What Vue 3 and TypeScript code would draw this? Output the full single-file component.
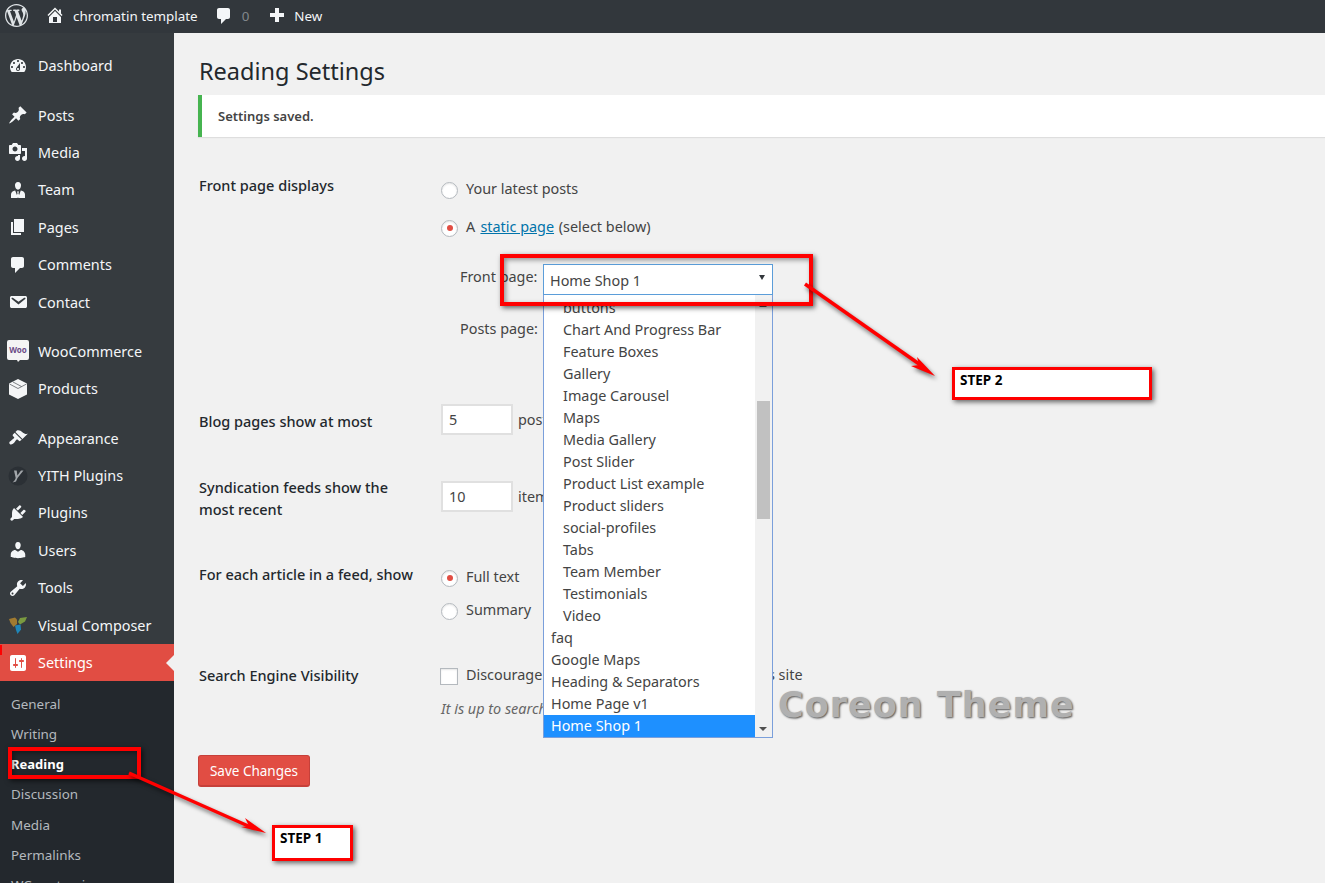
<script setup lang="ts">
interface MenuItem {
  label: string;
  icon: string;
  sep?: boolean;
}

const paths: Record<string, string> = {
  dashboard:
    'M3.76 16h12.48c1.1-1.37 1.76-3.11 1.76-5 0-4.42-3.58-8-8-8s-8 3.58-8 8c0 1.89.66 3.63 1.76 5zM10 4c.55 0 1 .45 1 1s-.45 1-1 1-1-.45-1-1 .45-1 1-1zM6 6c.55 0 1 .45 1 1s-.45 1-1 1-1-.45-1-1 .45-1 1-1zm8 0c.55 0 1 .45 1 1s-.45 1-1 1-1-.45-1-1 .45-1 1-1zm-5.37 5.55L12 7v6c0 1.1-.9 2-2 2s-2-.9-2-2c0-.57.24-1.08.63-1.45zM4 10c.55 0 1 .45 1 1s-.45 1-1 1-1-.45-1-1 .45-1 1-1zm12 0c.55 0 1 .45 1 1s-.45 1-1 1-1-.45-1-1 .45-1 1-1zm-5 3c0-.55-.45-1-1-1s-1 .45-1 1 .45 1 1 1 1-.45 1-1z',
  pin: 'M10.44 3.02l1.82-1.82 6.36 6.35-1.83 1.82c-1.05-.68-2.48-.57-3.41.36l-.75.75c-.92.93-1.04 2.35-.35 3.41l-1.83 1.82-2.41-2.41-2.8 2.79c-.42.42-3.38 2.71-3.8 2.29s1.86-3.39 2.28-3.81l2.79-2.79L4.1 9.36l1.83-1.82c1.05.69 2.48.57 3.4-.36l.75-.75c.93-.92 1.05-2.35.36-3.41z',
  media:
    'M13 11V4c0-.55-.45-1-1-1h-1.67L9 1H5L3.67 3H2c-.55 0-1 .45-1 1v7c0 .55.45 1 1 1h10c.55 0 1-.45 1-1zM7 4.5c1.38 0 2.5 1.12 2.5 2.5S8.38 9.5 7 9.5 4.5 8.38 4.5 7 5.62 4.5 7 4.5zM14 6h5v10.5c0 1.38-1.12 2.5-2.5 2.5S14 17.88 14 16.5s1.12-2.5 2.5-2.5c.17 0 .34.02.5.05V9h-3V6zm-4 8.05V13h2v3.5c0 1.38-1.12 2.5-2.5 2.5S7 17.88 7 16.5 8.12 14 9.5 14c.17 0 .34.02.5.05z',
  team: 'M10 2c2.2 0 3.2 1.8 3 3.8C12.8 7.8 11.8 9.7 10 9.7S7.2 7.8 7 5.8C6.8 3.8 7.8 2 10 2zM7.2 10.5L10 18H3v-3.5c0-2.3 1.8-3.8 4.2-4zM12.8 10.5c2.4.2 4.2 1.7 4.2 4V18h-7zM10 11l1 1-.6 1 .8 2.5L10 17l-1.2-1.5.8-2.5-.6-1z',
  sheets: 'M6 15V2h10v13H6zm-1 1h8v2H3V5h2v11z',
  comment: 'M5 2h9c1.1 0 2 .9 2 2v7c0 1.1-.9 2-2 2h-2l-5 5v-5H5c-1.1 0-2-.9-2-2V4c0-1.1.9-2 2-2z',
  mail: 'M3.87 4h13.25C18.37 4 19 4.59 19 5.79v8.42c0 1.19-.63 1.79-1.88 1.79H3.87c-1.25 0-1.88-.6-1.88-1.79V5.79c0-1.2.63-1.79 1.88-1.79zm6.62 8.6l6.74-5.53c.24-.2.43-.66.13-1.07-.29-.41-.82-.42-1.17-.17l-5.7 3.86L4.8 5.83c-.35-.25-.88-.24-1.17.17-.3.41-.11.87.13 1.07z',
  brush:
    'M14.48 11.06L7.41 3.99l1.5-1.5c.5-.56 2.3-.47 3.51.32 1.21.8 1.43 1.28 2.91 2.1 1.18.64 2.45 1.26 4.45.85zm-.71.71L6.7 4.7 4.93 6.47c-.39.39-.39 1.02 0 1.41l1.06 1.06c.39.39.39 1.03 0 1.42-.6.6-1.43 1.11-2.21 1.69-.35.26-.7.53-1.01.84C1.43 13.23.76 14.89 1.82 15.95s2.72.4 4.07-.95c.31-.31.58-.66.84-1.01.58-.78 1.09-1.61 1.69-2.21.39-.39 1.03-.39 1.42 0l1.06 1.06c.39.39 1.02.39 1.41 0z',
  plug: 'M13.11 4.36L9.87 7.6 8 5.73l3.24-3.24c.35-.34 1.05-.2 1.56.32.52.51.66 1.21.31 1.55zm-8 1.77l.91-1.12 9.01 9.01-1.19.84c-.71.71-2.63 1.16-3.82 1.16H6.14L4.9 17.26c-.59.59-1.54.59-2.12 0-.59-.58-.59-1.53 0-2.12l1.24-1.24v-3.88c0-1.13.4-3.19 1.09-3.89zm7.26 3.97l3.24-3.24c.34-.35 1.04-.21 1.55.31.52.51.66 1.21.31 1.55l-3.24 3.25z',
  user: 'M10 9.25c-2.27 0-2.73-3.44-2.73-3.44C7 4.02 7.82 2 9.97 2c2.16 0 2.98 2.02 2.71 3.81 0 0-.41 3.44-2.68 3.44zm0 2.57L12.72 10c2.39 0 4.52 2.33 4.52 4.53v2.49s-3.65 1.13-7.24 1.13c-3.65 0-7.24-1.13-7.24-1.13v-2.49c0-2.25 1.94-4.48 4.47-4.48z',
  tools:
    'M16.68 9.77c-1.34 1.34-3.3 1.67-4.95.99l-5.41 6.52c-.99.99-2.59.99-3.58 0s-.99-2.59 0-3.57l6.52-5.42c-.68-1.65-.35-3.61.99-4.95 1.28-1.28 3.12-1.62 4.72-1.06l-2.89 2.89 2.82 2.82 2.86-2.87c.53 1.58.18 3.39-1.08 4.65zM3.81 16.21c.4.39 1.04.39 1.43 0 .4-.4.4-1.04 0-1.43-.39-.4-1.03-.4-1.43 0-.39.39-.39 1.03 0 1.43z',
  settings:
    'M18 16V4c0-1.1-.9-2-2-2H4c-1.1 0-2 .9-2 2v12c0 1.1.9 2 2 2h12c1.1 0 2-.9 2-2zM8 11h1c.55 0 1 .45 1 1s-.45 1-1 1H8v1.5c0 .28-.22.5-.5.5s-.5-.22-.5-.5V13H6c-.55 0-1-.45-1-1s.45-1 1-1h1V5.5c0-.28.22-.5.5-.5s.5.22.5.5V11zm5-2h-1c-.55 0-1-.45-1-1s.45-1 1-1h1V5.5c0-.28.22-.5.5-.5s.5.22.5.5V7h1c.55 0 1 .45 1 1s-.45 1-1 1h-1v5.5c0 .28-.22.5-.5.5s-.5-.22-.5-.5V9z',
  wp: 'M20 10c0-5.51-4.49-10-10-10C4.48 0 0 4.49 0 10c0 5.52 4.48 10 10 10 5.51 0 10-4.48 10-10zM7.78 15.37L4.37 6.22c.55-.02 1.17-.08 1.17-.08.5-.06.44-1.13-.06-1.11 0 0-1.45.11-2.37.11-.18 0-.37 0-.58-.01C4.12 2.69 6.87 1.11 10 1.11c2.33 0 4.45.87 6.05 2.34-.68-.11-1.65.39-1.65 1.58 0 .74.45 1.36.9 2.1.35.61.55 1.36.55 2.46 0 1.49-1.4 5-1.4 5l-3.03-8.37c.54-.02.82-.17.82-.17.5-.05.44-1.25-.06-1.22 0 0-1.44.12-2.38.12-.87 0-2.33-.12-2.33-.12-.5-.03-.56 1.2-.06 1.22l.92.08 1.26 3.41zM17.41 10c.24-.64.74-1.87.43-4.25.7 1.29 1.05 2.71 1.05 4.25 0 3.29-1.73 6.24-4.4 7.78.97-2.59 1.94-5.2 2.92-7.78zM6.1 18.09C3.12 16.65 1.11 13.53 1.11 10c0-1.3.23-2.48.72-3.59C3.25 10.3 4.67 14.2 6.1 18.09zm4.03-6.63l2.58 6.98c-.86.29-1.76.45-2.71.45-.79 0-1.57-.11-2.29-.33.81-2.38 1.62-4.74 2.42-7.1z',
  home: 'M16 8.5l1.53 1.53-1.06 1.06L10 4.62l-6.47 6.47-1.06-1.06L10 2.5l4 4v-2h2v4zm-6-2.46l6 5.99V18H4v-5.97zM12 17v-5H8v5h4z',
  plus: 'M17 8v4h-5v5H8v-5H3V8h5V3h4v5h5z',
};

const menu: MenuItem[] = [
  { label: 'Dashboard', icon: 'dashboard' },
  { label: 'Posts', icon: 'pin', sep: true },
  { label: 'Media', icon: 'media' },
  { label: 'Team', icon: 'team' },
  { label: 'Pages', icon: 'sheets' },
  { label: 'Comments', icon: 'comment' },
  { label: 'Contact', icon: 'mail' },
  { label: 'WooCommerce', icon: 'woo', sep: true },
  { label: 'Products', icon: 'box' },
  { label: 'Appearance', icon: 'brush', sep: true },
  { label: 'YITH Plugins', icon: 'yith' },
  { label: 'Plugins', icon: 'plug' },
  { label: 'Users', icon: 'user' },
  { label: 'Tools', icon: 'tools' },
  { label: 'Visual Composer', icon: 'vc' },
];

const submenu = ['General', 'Writing', 'Reading', 'Discussion', 'Media', 'Permalinks', 'WC customizer'];

const options = [
  { label: 'buttons', nested: true },
  { label: 'Chart And Progress Bar', nested: true },
  { label: 'Feature Boxes', nested: true },
  { label: 'Gallery', nested: true },
  { label: 'Image Carousel', nested: true },
  { label: 'Maps', nested: true },
  { label: 'Media Gallery', nested: true },
  { label: 'Post Slider', nested: true },
  { label: 'Product List example', nested: true },
  { label: 'Product sliders', nested: true },
  { label: 'social-profiles', nested: true },
  { label: 'Tabs', nested: true },
  { label: 'Team Member', nested: true },
  { label: 'Testimonials', nested: true },
  { label: 'Video', nested: true },
  { label: 'faq', nested: false },
  { label: 'Google Maps', nested: false },
  { label: 'Heading & Separators', nested: false },
  { label: 'Home Page v1', nested: false },
  { label: 'Home Shop 1', nested: false },
];
</script>

<template>
  <div class="page">
    <header class="adminbar">
      <svg class="logo" viewBox="0 0 20 20"><path :d="paths.wp" /></svg>
      <svg class="bar-icon home" viewBox="0 0 20 20"><path :d="paths.home" /></svg>
      <span class="site">chromatin template</span>
      <svg class="bar-icon bubble" viewBox="0 0 20 20"><path :d="paths.comment" /></svg>
      <span class="count">0</span>
      <svg class="bar-icon add" viewBox="0 0 20 20"><path :d="paths.plus" /></svg>
      <span class="new">New</span>
    </header>

    <div class="body">
      <aside class="sidebar">
        <ul class="menu">
          <li v-for="item in menu" :key="item.label" :class="['item', { sep: item.sep }]">
            <span class="icon">
              <svg v-if="item.icon === 'woo'" class="ic-woo" viewBox="0 0 22 22">
                <path d="M2 0h18a2 2 0 0 1 2 2v16a2 2 0 0 1-2 2h-7l-2 2-1-2H2a2 2 0 0 1-2-2V2a2 2 0 0 1 2-2z" fill="#f4f4f4" />
                <text x="11" y="13" text-anchor="middle" class="woo-text">Woo</text>
              </svg>
              <svg v-else-if="item.icon === 'box'" viewBox="0 0 20 20">
                <path d="M10 0l9 4.5v11L10 20l-9-4.500v-11z" fill="#f4f5f6" />
                <path d="M1.5 5L10 9.500 18.500 5M5 3l8.500 4.500" fill="none" stroke="#4a4f54" stroke-width=".7" />
              </svg>
              <svg v-else-if="item.icon === 'yith'" viewBox="0 0 20 20">
                <circle cx="10" cy="10" r="9.5" fill="#2b3035" />
                <path d="M6 4.500h2.700l.7 5 3.600-5h2.500l-6 7.500-1.500 3.500-3.500 1c1.500-1.200 2.700-2.800 3.200-4.500z" fill="#a2a6aa" />
              </svg>
              <svg v-else-if="item.icon === 'vc'" class="ic-vc" viewBox="0 0 20 20">
                <path d="M1 4l6-1.500 2 2v4.500L5.500 12 2.500 8z" fill="#a07a30" />
                <path d="M12 3l7-1-2 4.500-5 3-2-2.500z" fill="#7a9a40" />
                <path d="M7 10.500l5.500-1 .5 5-3.500 4.500L8 15z" fill="#1f86b8" />
              </svg>
              <svg v-else viewBox="0 0 20 20"><path :d="paths[item.icon]" /></svg>
            </span>
            <span>{{ item.label }}</span>
          </li>
          <li class="item current">
            <span class="icon"><svg viewBox="0 0 20 20"><path :d="paths.settings" /></svg></span>
            <span>Settings</span>
          </li>
        </ul>
        <ul class="submenu">
          <li v-for="s in submenu" :key="s" :class="{ active: s === 'Reading' }">{{ s }}</li>
        </ul>
      </aside>

      <main class="content">
        <h1>Reading Settings</h1>
        <div class="notice">Settings saved.</div>

        <section class="row row-front">
          <div class="label">Front page displays</div>
          <div>
            <div class="opt"><span class="radio"></span>Your latest posts</div>
            <div class="opt gap16">
              <span class="radio on"></span>A&nbsp;<a class="link">static page</a>&nbsp;(select below)
            </div>
            <div class="sel-row first">
              <span class="sel-label">Front page:</span>
              <div class="select">
                <span>Home Shop 1</span>
                <span class="caret"></span>
                <div class="dropdown">
                  <ul class="options">
                    <li
                      v-for="o in options"
                      :key="o.label"
                      :class="{ nested: o.nested, selected: o.label === 'Home Shop 1' }"
                    >
                      {{ o.label }}
                    </li>
                  </ul>
                  <div class="scroll">
                    <span class="up"></span>
                    <span class="thumb"></span>
                    <span class="down"></span>
                  </div>
                </div>
              </div>
            </div>
            <div class="sel-row second">
              <span class="sel-label">Posts page:</span>
              <div class="select"></div>
            </div>
          </div>
        </section>

        <section class="row row-blog">
          <div class="label pad7">Blog pages show at most</div>
          <div class="num-row"><span class="num">5</span><span class="cut">posts</span></div>
        </section>

        <section class="row row-synd">
          <div class="label">Syndication feeds show the most recent</div>
          <div class="num-row pad4"><span class="num">10</span><span class="cut">items</span></div>
        </section>

        <section class="row row-feed">
          <div class="label">For each article in a feed, show</div>
          <div class="pad3">
            <div class="opt"><span class="radio on"></span>Full text</div>
            <div class="opt gap11"><span class="radio"></span>Summary</div>
          </div>
        </section>

        <section class="row row-search">
          <div class="label">Search Engine Visibility</div>
          <div>
            <div class="opt"><span class="check"></span>Discourage search engines from indexing this site</div>
            <p class="hint">It is up to search engines to honor this request.</p>
          </div>
        </section>

        <button class="save">Save Changes</button>
      </main>
    </div>

    <div class="overlay">
      <div class="mark"></div>
      <div class="watermark">Coreon Theme</div>
      <div class="frame frame-reading"></div>
      <div class="frame frame-select"></div>
      <svg class="arrows" width="1325" height="883" viewBox="0 0 1325 883">
        <line x1="129" y1="773" x2="255" y2="829" />
        <polygon points="266,833 245,818 249,826 241,827" />
        <line x1="805" y1="284" x2="922" y2="366" />
        <polygon points="935,376 917,357 919,365 911,366" />
      </svg>
      <div class="step step-1">STEP 1</div>
      <div class="step step-2">STEP 2</div>
    </div>
  </div>
</template>

<style scoped>
.page {
  position: relative;
  width: 1325px;
  height: 883px;
  overflow: hidden;
  background: #f1f1f1;
  font-family: 'Noto Sans', 'Open Sans', sans-serif;
  font-size: 14.4px;
  color: #444;
}
ul {
  list-style: none;
  margin: 0;
  padding: 0;
}
svg {
  display: block;
  fill: currentColor;
}
.adminbar {
  height: 33px;
  background: #32373c;
  color: #f4f6f8;
  display: flex;
  align-items: center;
  font-size: 13.4px;
}
.adminbar span {
  padding-bottom: 2px;
}
.logo {
  width: 23px;
  height: 23px;
  margin-left: 5px;
  margin-top: -2px;
  color: #dfe3e6;
}
.bar-icon {
  width: 20px;
  height: 20px;
}
.home {
  margin-left: 17px;
  margin-top: -3px;
}
.site {
  margin-left: 8px;
}
.bubble {
  margin-left: 16px;
  margin-top: -2px;
}
.count {
  margin-left: 8px;
  color: #82878c;
}
.add {
  margin-left: 18px;
  margin-top: -3px;
}
.new {
  margin-left: 7px;
}
.body {
  display: flex;
  height: 850px;
}
.sidebar {
  width: 174px;
  flex: none;
  background: #363b3f;
  color: #f4f6f8;
  display: flex;
  flex-direction: column;
  overflow: hidden;
}
.menu {
  padding-top: 14px;
}
.item {
  height: 37.4px;
  display: flex;
  align-items: center;
  position: relative;
}
.item.sep {
  margin-top: 12px;
}
.icon {
  width: 20px;
  height: 20px;
  margin-left: 8px;
  margin-right: 10px;
  flex: none;
  position: relative;
}
.ic-woo {
  position: absolute;
  left: -1px;
  top: -1px;
  width: 22px;
  height: 22px;
}
.ic-vc {
  filter: blur(0.4px);
}
.woo-text {
  font-size: 8px;
  font-weight: 700;
  fill: #6b4a85;
}
.current {
  background: #e14d43;
  color: #fff;
}
.current::after {
  content: '';
  position: absolute;
  right: 0;
  top: 50%;
  margin-top: -8px;
  border: 8px solid transparent;
  border-right-color: #f1f1f1;
  border-left-width: 0;
}
.submenu {
  flex: 1;
  background: #23282d;
  padding-top: 7.6px;
  font-size: 13.4px;
  color: #b4b9be;
}
.submenu li {
  height: 30.2px;
  line-height: 30px;
  padding-left: 11px;
}
.submenu .active {
  color: #fff;
  font-weight: 700;
  font-size: 13px;
}
.content {
  flex: 1;
  padding-left: 24px;
  min-width: 0;
}
h1 {
  margin: 0;
  padding: 21px 0 0 1px;
  height: 62px;
  box-sizing: border-box;
  font-size: 23.5px;
  line-height: 34px;
  font-weight: 400;
  color: #23282d;
}
.notice {
  height: 42px;
  box-sizing: border-box;
  border-left: 4px solid #46b450;
  background: #fff;
  padding-left: 16px;
  line-height: 42px;
  font-size: 13px;
  font-weight: 600;
  box-shadow: 0 1px 1px rgba(0, 0, 0, 0.08);
}
.row {
  display: grid;
  grid-template-columns: 242px 1fr;
  padding-left: 1px;
  line-height: 22px;
}
.row-front {
  margin-top: 38px;
}
.row-blog {
  margin-top: 59px;
}
.row-synd {
  margin-top: 42px;
}
.row-feed {
  margin-top: 44px;
}
.row-search {
  margin-top: 43px;
}
.label {
  color: #23282d;
  font-size: 14.5px;
  font-weight: 500;
  width: 222px;
  margin-top: -1px;
}
.pad7 {
  padding-top: 7px;
}
.pad4 {
  padding-top: 4px;
}
.pad3 {
  padding-top: 3px;
}
.opt {
  display: flex;
  align-items: center;
  box-sizing: border-box;
  height: 22px;
  padding-bottom: 2px;
  white-space: nowrap;
}
.row-front .opt:first-child {
  margin-top: 4px;
}
.gap16 {
  margin-top: 16px;
}
.gap11 {
  margin-top: 11px;
}
.radio,
.check {
  flex: none;
  box-sizing: border-box;
  width: 17px;
  height: 17px;
  margin-top: 2px;
  margin-right: 8px;
  background: #fff;
  border: 1px solid #b4b9be;
  box-shadow: inset 0 1px 2px rgba(0, 0, 0, 0.1);
  display: inline-flex;
  align-items: center;
  justify-content: center;
}
.radio {
  border-radius: 50%;
}
.check {
  margin-left: -1px;
  width: 18px;
}
.radio.on::before {
  content: '';
  width: 6px;
  height: 6px;
  border-radius: 50%;
  background: #e14d43;
}
.link {
  color: #0073aa;
  text-decoration: underline;
  margin: 0 1px 0 1.5px;
}
.sel-row {
  display: flex;
  margin-left: 19px;
}
.sel-row.first {
  margin-top: 25px;
}
.sel-row.second {
  margin-top: 19px;
}
.sel-label {
  width: 83px;
  padding-top: 2px;
  white-space: nowrap;
}
.second .sel-label {
  padding-top: 4px;
}
.select {
  position: relative;
  box-sizing: border-box;
  width: 230px;
  height: 31px;
  background: #fff;
  border: 1px solid #5b9dd9;
  padding: 5px 6px 0;
}
.caret {
  position: absolute;
  right: 7px;
  top: 10px;
  border-style: solid;
  border-width: 5px 3.5px 0;
  border-color: #32373c transparent transparent;
}
.dropdown {
  position: absolute;
  z-index: 2;
  left: -1px;
  top: 30px;
  width: 230px;
  height: 443px;
  box-sizing: border-box;
  display: flex;
  background: #fff;
  border: 1px solid #7a9fdb;
  border-top: 0;
  overflow: hidden;
}
.options {
  flex: 1;
  padding-top: 2px;
  min-width: 0;
}
.options li {
  height: 22px;
  line-height: 22px;
  padding-left: 7px;
}
.options li.nested {
  padding-left: 19px;
}
.options .selected {
  background: #1e90ff;
  color: #fff;
}
.scroll {
  position: relative;
  width: 17px;
  background: #f1f1f1;
}
.up {
  position: absolute;
  left: 4px;
  top: 8px;
  border-style: solid;
  border-width: 0 4px 4px;
  border-color: transparent transparent #505050;
}
.thumb {
  position: absolute;
  left: 2px;
  right: 2px;
  top: 106px;
  height: 118px;
  background: #c1c1c1;
}
.down {
  position: absolute;
  left: 4px;
  bottom: 6px;
  border-style: solid;
  border-width: 4px 4px 0;
  border-color: #505050 transparent transparent;
}
.num-row {
  display: flex;
  align-items: flex-start;
  line-height: 31px;
}
.num {
  box-sizing: border-box;
  width: 72px;
  height: 31px;
  line-height: 27px;
  margin-right: 5px;
  padding-left: 6px;
  background: #fff;
  border: 2px solid #e0e0e0;
}
.cut {
  white-space: nowrap;
}
.hint {
  margin: 11px 0 0;
  font-style: italic;
  color: #666;
  white-space: nowrap;
}
.save {
  display: block;
  margin-top: 35px;
  width: 112px;
  height: 32px;
  padding: 0;
  font: inherit;
  font-size: 13.5px;
  color: #fff;
  background: #e14d43;
  border: 1px solid #c6403a;
  border-bottom-width: 2px;
  border-radius: 3px;
}
.overlay {
  position: absolute;
  inset: 0;
  z-index: 5;
  pointer-events: none;
}
.mark {
  position: absolute;
  left: 0;
  top: 645px;
  width: 2px;
  height: 10px;
  background: #f00;
}
.watermark {
  position: absolute;
  left: 778px;
  top: 682px;
  font-family: 'DejaVu Sans', sans-serif;
  font-weight: 700;
  font-size: 35px;
  line-height: 46px;
  letter-spacing: 1px;
  white-space: nowrap;
  color: #b0b0b0;
  text-shadow: 1px 1px 2px #555;
}
.frame {
  position: absolute;
  box-sizing: border-box;
  border: 4px solid #f00;
  box-shadow: 2px 2px 5px rgba(0, 0, 0, 0.6), inset 2px 2px 5px rgba(0, 0, 0, 0.4);
}
.frame-reading {
  left: 8px;
  top: 747px;
  width: 133px;
  height: 32px;
}
.frame-select {
  left: 500px;
  top: 254px;
  width: 313px;
  height: 52px;
}
.arrows {
  position: absolute;
  left: 0;
  top: 0;
  filter: drop-shadow(2px 3px 2px rgba(0, 0, 0, 0.55));
}
.arrows line {
  stroke: #f00;
  stroke-width: 3.5;
}
.arrows polygon {
  fill: #f00;
}
.step {
  position: absolute;
  box-sizing: border-box;
  background: #fff;
  border: 3px solid #f00;
  box-shadow: 2px 2px 5px rgba(0, 0, 0, 0.6);
  color: #000;
  font-size: 13.5px;
  font-weight: 700;
  line-height: 16px;
  padding: 2px 5px;
}
.step-1 {
  left: 272px;
  top: 825px;
  width: 81px;
  height: 36px;
}
.step-2 {
  left: 952px;
  top: 367px;
  width: 200px;
  height: 33px;
}
</style>

<style>
html,
body {
  margin: 0;
  overflow: hidden;
}
</style>
